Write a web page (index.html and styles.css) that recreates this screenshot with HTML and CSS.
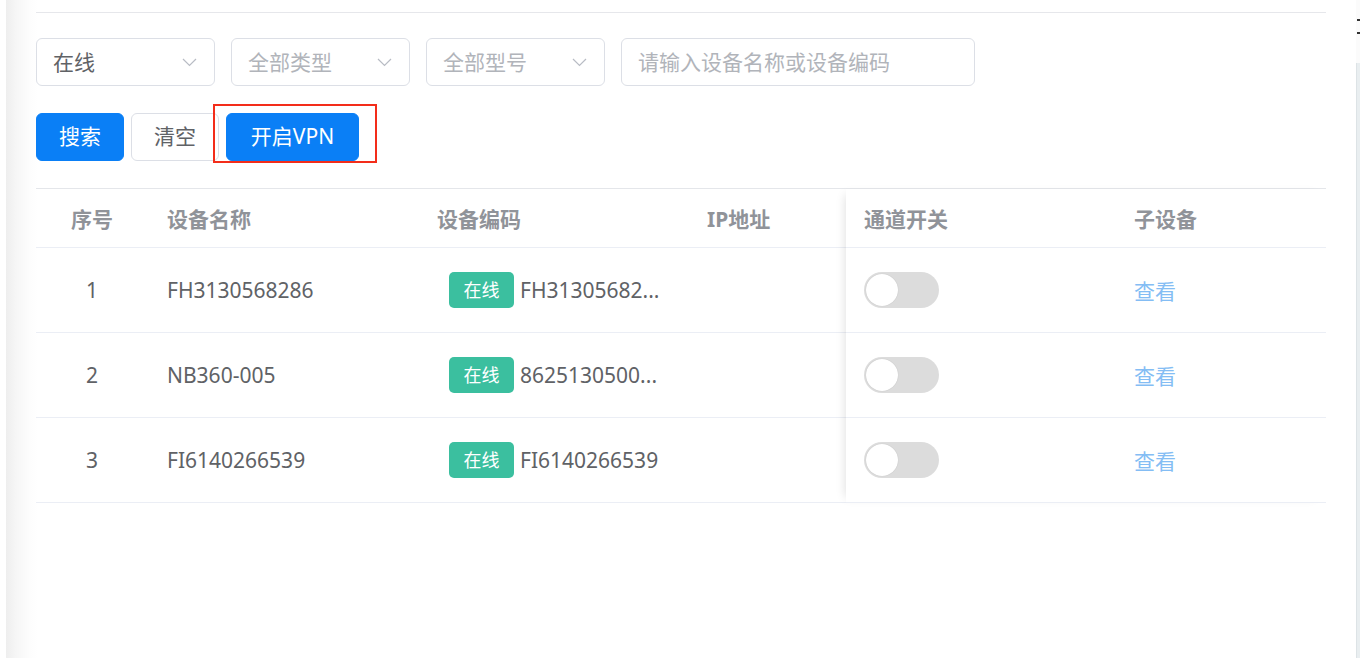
FILE: index.html
```html
<!DOCTYPE html>
<html lang="zh-CN">
<head>
<meta charset="utf-8">
<title>设备列表</title>
<link rel="stylesheet" href="styles.css">
</head>
<body>
<div class="page">
  <div class="gutter"></div>
  <main class="main">
    <div class="content">
      <div class="topline"></div>

      <div class="filters">
        <div class="select">
          <span class="select-value">在线</span>
          <svg class="chev" width="15" height="9" viewBox="0 0 15 9"><path d="M1 1 L7.5 7.5 L14 1" fill="none" stroke="#b8bcc4" stroke-width="1.2"/></svg>
        </div>
        <div class="select">
          <span class="select-placeholder">全部类型</span>
          <svg class="chev" width="15" height="9" viewBox="0 0 15 9"><path d="M1 1 L7.5 7.5 L14 1" fill="none" stroke="#b8bcc4" stroke-width="1.2"/></svg>
        </div>
        <div class="select">
          <span class="select-placeholder">全部型号</span>
          <svg class="chev" width="15" height="9" viewBox="0 0 15 9"><path d="M1 1 L7.5 7.5 L14 1" fill="none" stroke="#b8bcc4" stroke-width="1.2"/></svg>
        </div>
        <div class="input">
          <span class="select-placeholder">请输入设备名称或设备编码</span>
        </div>
      </div>

      <div class="actions">
        <button class="btn btn-primary btn-search">搜索</button>
        <button class="btn btn-default btn-clear">清空</button>
        <button class="btn btn-primary btn-vpn">开启VPN</button>
        <div class="highlight"></div>
      </div>

      <div class="table">
        <div class="tpart tleft">
          <div class="trow thead">
            <div class="cell c1 center">序号</div>
            <div class="cell c2">设备名称</div>
            <div class="cell c3">设备编码</div>
            <div class="cell c4">IP地址</div>
          </div>
          <div class="trow">
            <div class="cell c1 center">1</div>
            <div class="cell c2">FH3130568286</div>
            <div class="cell c3"><span class="tag">在线</span><span class="code">FH31305682...</span></div>
            <div class="cell c4"></div>
          </div>
          <div class="trow">
            <div class="cell c1 center">2</div>
            <div class="cell c2">NB360-005</div>
            <div class="cell c3"><span class="tag">在线</span><span class="code">8625130500...</span></div>
            <div class="cell c4"></div>
          </div>
          <div class="trow">
            <div class="cell c1 center">3</div>
            <div class="cell c2">FI6140266539</div>
            <div class="cell c3"><span class="tag">在线</span><span class="code">FI6140266539</span></div>
            <div class="cell c4"></div>
          </div>
        </div>
        <div class="tpart tright">
          <div class="trow thead">
            <div class="cell c5">通道开关</div>
            <div class="cell c6">子设备</div>
          </div>
          <div class="trow">
            <div class="cell c5"><span class="switch"><span class="knob"></span></span></div>
            <div class="cell c6"><span class="link">查看</span></div>
          </div>
          <div class="trow">
            <div class="cell c5"><span class="switch"><span class="knob"></span></span></div>
            <div class="cell c6"><span class="link">查看</span></div>
          </div>
          <div class="trow">
            <div class="cell c5"><span class="switch"><span class="knob"></span></span></div>
            <div class="cell c6"><span class="link">查看</span></div>
          </div>
        </div>
      </div>
    </div>
  </main>
  <div class="edge">
    <div class="edge-top"><span class="bit bit1"></span><span class="bit bit2"></span></div>
    <div class="edge-body"></div>
  </div>
</div>
</body>
</html>
```

FILE: styles.css
```css
* { box-sizing: border-box; }
html, body { margin: 0; padding: 0; background: #fff; }
body {
  font-family: "Noto Sans", "Noto Sans CJK SC", sans-serif;
  font-size: 21px;
  color: #606266;
  width: 1360px;
  height: 658px;
  overflow: hidden;
}
.page { display: flex; width: 1360px; height: 658px; }
.gutter { width: 6px; flex: none; background: #fff; }
.main {
  width: 1350px;
  flex: none;
  background: linear-gradient(to right, #eeeeee 0, #f6f6f6 10px, #fdfdfd 24px, #ffffff 32px);
}
.content { padding: 12px 0 0 30px; width: 1320px; }
.topline { height: 1px; background: #e6e7eb; width: 1290px; }

.filters { display: flex; gap: 16px; margin-top: 25px; height: 48px; }
.select, .input {
  height: 48px;
  border: 1px solid #dcdfe6;
  border-radius: 6px;
  background: #fff;
  display: flex;
  align-items: center;
  padding: 0 17px 0 16px;
}
.select { width: 179px; justify-content: space-between; }
.input { width: 354px; }
.select-value { color: #606266; line-height: 1; }
.select-placeholder { color: #b1b4ba; line-height: 1; }
.chev { display: block; flex: none; }

.actions { position: relative; display: flex; gap: 7px; margin-top: 27px; height: 48px; }
.btn {
  height: 48px;
  border-radius: 6px;
  font-family: inherit;
  font-size: 21px;
  padding: 0 0 2px;
  line-height: 1;
  cursor: pointer;
}
.btn-primary { background: #0a7ff6; border: 1px solid #0a7ff6; color: #fff; }
.btn-default { background: #fff; border: 1px solid #dcdfe6; color: #606266; }
.btn-search { width: 88px; }
.btn-clear { width: 88px; }
.btn-vpn { width: 133px; }
.highlight {
  position: absolute;
  left: 177px;
  top: -9px;
  width: 164px;
  height: 59px;
  border: 2px solid #f32d1a;
  pointer-events: none;
}

.table {
  display: flex;
  margin-top: 27px;
  width: 1290px;
  border-top: 1px solid #e4e6ea;
}
.tpart { display: flex; flex-direction: column; }
.tleft { width: 810px; }
.tright {
  width: 480px;
  background: #fff;
  box-shadow: -6px 0 10px -6px rgba(0, 0, 0, 0.14);
  position: relative;
}
.trow {
  display: flex;
  height: 85px;
  border-bottom: 1px solid #ebeef5;
  align-items: center;
}
.thead { height: 59px; font-weight: 700; color: #909399; }
.cell { display: flex; align-items: center; padding-left: 19px; height: 100%; white-space: nowrap; overflow: hidden; }
.center { justify-content: center; padding-left: 0; }
.c1 { width: 112px; }
.c2 { width: 270px; }
.c3 { width: 270px; }
.c4 { width: 158px; }
.c5 { width: 269px; padding-left: 18px; }
.c6 { width: 211px; }

.trow:not(.thead) .c3 { padding-left: 31px; }
.tag {
  display: inline-flex;
  align-items: center;
  justify-content: center;
  width: 65px;
  height: 36px;
  background: #3bbf9f;
  color: #fff;
  border-radius: 5px;
  font-size: 18px;
  line-height: 1;
  margin-right: 6px;
}
.code { color: #606266; }

.switch {
  display: block;
  width: 75px;
  height: 36px;
  border-radius: 18px;
  background: #dcdcdc;
  padding: 2px;
}
.knob {
  display: block;
  width: 32px;
  height: 32px;
  border-radius: 50%;
  background: #fff;
  box-shadow: 0 0 1px rgba(0, 0, 0, 0.2);
}
.link { color: #84bdf4; }

.edge { width: 4px; flex: none; display: flex; flex-direction: column; }
.edge-top { height: 63px; background: #fbfbfb; position: relative; }
.bit { position: absolute; left: 1px; width: 3px; height: 2px; background: #333; }
.bit1 { top: 19px; }
.bit2 { top: 32px; }
.edge-body { flex: 1; background: #e9eef0; border-left: 1px solid #dde3e6; }
```
